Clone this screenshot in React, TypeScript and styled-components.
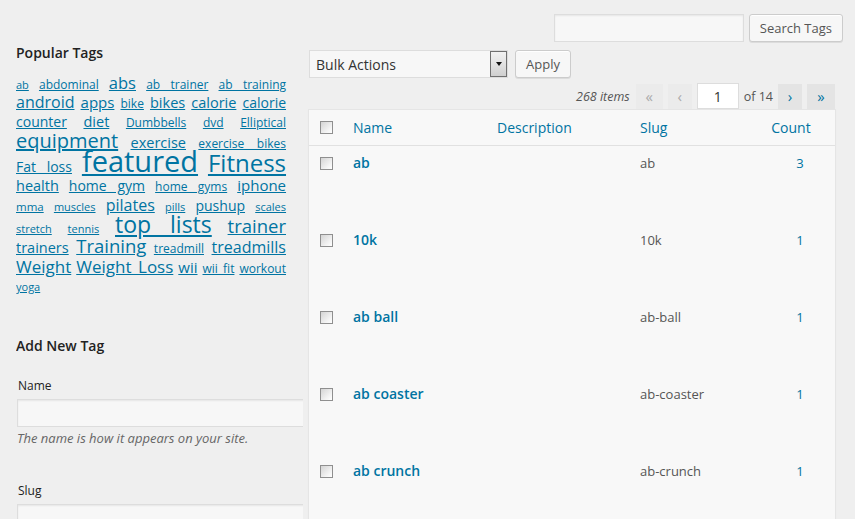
import React from 'react'
import styled, { createGlobalStyle } from 'styled-components'

const blue = '#0074a2'

const GlobalStyle = createGlobalStyle`
  html, body {
    margin: 0;
    padding: 0;
  }
  body {
    background: #efefef;
    font-family: 'Open Sans', 'Liberation Sans', sans-serif;
    color: #444;
    font-size: 13px;
    overflow: hidden;
  }
`

const Wrap = styled.div`
  width: 855px;
  height: 519px;
  box-sizing: border-box;
  padding: 14px 12px 0 16px;
  overflow: hidden;
`

const SearchBar = styled.div`
  display: flex;
  justify-content: flex-end;
  gap: 5px;
`

const TextInput = styled.input<{ $w?: string }>`
  box-sizing: border-box;
  height: 28px;
  width: ${p => p.$w ?? '100%'};
  margin: 0;
  padding: 3px 6px;
  border: 1px solid #ddd;
  border-radius: 0;
  background: #f7f7f7;
  box-shadow: inset 0 1px 2px rgba(0, 0, 0, 0.07);
  font-family: inherit;
  font-size: 14px;
  color: #333;
  outline: none;
`

const Button = styled.button`
  box-sizing: border-box;
  height: 28px;
  margin: 0;
  padding: 0 10px 1px;
  border: 1px solid #ccc;
  border-radius: 3px;
  background: #f7f7f7;
  box-shadow: inset 0 1px 0 #fff, 0 1px 0 rgba(0, 0, 0, 0.08);
  font-family: inherit;
  font-size: 13px;
  color: #555;
`

const Columns = styled.div`
  display: flex;
  align-items: flex-start;
`

const LeftCol = styled.div`
  flex: none;
  width: 287px;
  overflow: hidden;
`

const RightCol = styled.div`
  flex: 1;
  min-width: 0;
  margin-left: 5px;
  padding-right: 7px;
`

const Heading = styled.h3<{ $gap: number }>`
  margin: ${p => p.$gap}px 0 0;
  font-size: 14px;
  font-weight: 600;
  line-height: 19px;
  color: #222;
`

const TagCloud = styled.div`
  width: 270px;
  margin-top: 13px;
`

// one visual line of the cloud, stretched edge to edge like the original
const TagLine = styled.div<{ $gap: number; $last?: boolean }>`
  margin-top: ${p => p.$gap}px;
  height: 20px;
  font-size: 11px;
  line-height: 20px;
  text-align: justify;
  text-align-last: ${p => (p.$last ? 'left' : 'justify')};
`

const Tag = styled.a<{ $size: number }>`
  font-size: ${p => p.$size}px;
  line-height: 0;
  color: ${blue};
  text-decoration: underline;
`

const FieldLabel = styled.label<{ $gap: number }>`
  display: block;
  margin: ${p => p.$gap}px 0 4px 2px;
  font-size: 12px;
  line-height: 18px;
  color: #222;
`

const FieldInput = styled(TextInput)`
  margin-left: 1px;
  width: 290px;
`

const Hint = styled.p`
  margin: 2px 0 0 1px;
  font-size: 13px;
  font-style: italic;
  line-height: 18px;
  color: #666;
`

const TableNav = styled.div`
  display: flex;
  align-items: center;
  gap: 7px;
  margin-top: 8px;
`

const SelectBox = styled.div`
  box-sizing: border-box;
  width: 199px;
  height: 28px;
  margin-left: 1px;
  padding-left: 6px;
  display: flex;
  align-items: center;
  justify-content: space-between;
  border: 1px solid #ddd;
  background: #f7f7f7;
  font-size: 14px;
  color: #333;
`

const SelectArrow = styled.span`
  box-sizing: border-box;
  width: 17px;
  height: 26px;
  display: flex;
  justify-content: center;
  padding-top: 10px;
  border: 1px solid #707070;
  background: linear-gradient(#f2f2f2, #e0e0e0 55%, #cfcfcf);

  &::after {
    content: '';
    width: 0;
    height: 0;
    border-left: 3.5px solid transparent;
    border-right: 3.5px solid transparent;
    border-top: 4px solid #111;
  }
`

const Pagination = styled.div`
  display: flex;
  justify-content: flex-end;
  align-items: center;
  gap: 5px;
  margin-top: 5px;
  padding-right: 1px;
`

const ItemCount = styled.span`
  margin-right: 1px;
  font-size: 12.5px;
  font-style: italic;
  color: #555;
`

const PageButton = styled.span<{ $disabled?: boolean; $w: number }>`
  box-sizing: border-box;
  width: ${p => p.$w}px;
  height: 25px;
  display: flex;
  align-items: center;
  justify-content: center;
  background: ${p => (p.$disabled ? '#ebebeb' : '#e4e4e4')};
  color: ${p => (p.$disabled ? '#aaa' : blue)};
  font-size: 15px;
  line-height: 1;
`

const PageInput = styled.span`
  box-sizing: border-box;
  width: 42px;
  height: 26px;
  display: flex;
  align-items: center;
  justify-content: center;
  border: 1px solid #ddd;
  background: #fff;
  font-size: 14px;
  color: #333;
`

const OfPages = styled.span`
  font-size: 12.5px;
  color: #555;
`

const Table = styled.div`
  border: 1px solid #e5e5e5;
  background: #f8f8f8;
  box-shadow: 0 1px 1px rgba(0, 0, 0, 0.04);
`

const gridCols = '36px 144px 143px 1fr 82px'

const HeadRow = styled.div`
  display: grid;
  grid-template-columns: ${gridCols};
  align-items: center;
  height: 35px;
  border-bottom: 1px solid #e1e1e1;
`

const BodyRow = styled.div`
  display: grid;
  grid-template-columns: ${gridCols};
  align-items: start;
  box-sizing: border-box;
  height: 77px;
  padding-top: 7px;
`

const CheckCell = styled.div`
  padding-left: 11px;
  display: flex;
  align-items: center;
  height: 20px;
`

const CheckBox = styled.span`
  box-sizing: border-box;
  width: 13px;
  height: 13px;
  border: 1px solid #8f8f8f;
  background: linear-gradient(135deg, #d4d4d4, #f4f4f4 70%, #fff);
`

const HeadCell = styled.div<{ $center?: boolean }>`
  padding-left: ${p => (p.$center ? '0' : '8px')};
  padding-right: ${p => (p.$center ? '6px' : '0')};
  text-align: ${p => (p.$center ? 'center' : 'left')};
  font-size: 14px;
  line-height: 20px;
  color: ${blue};
`

const RowTitle = styled.div`
  padding-left: 8px;
  font-size: 14px;
  font-weight: 600;
  line-height: 20px;
  color: ${blue};
`

const Cell = styled.div<{ $count?: boolean }>`
  padding-left: ${p => (p.$count ? '12px' : '8px')};
  text-align: ${p => (p.$count ? 'center' : 'left')};
  font-size: 13px;
  line-height: 20px;
  color: ${p => (p.$count ? blue : '#555')};
`

type TagItem = [string, number]

// lines of the tag cloud as they wrap in the original, with the extra
// spacing each line gets from its tallest tag
const tagLines: { gap: number; tags: TagItem[] }[] = [
  { gap: 0, tags: [['ab', 11], ['abdominal', 12], ['abs', 16.5], ['ab trainer', 12], ['ab training', 12]] },
  { gap: -1, tags: [['android', 16], ['apps', 15], ['bike', 12], ['bikes', 14.5], ['calorie', 14.5], ['calorie', 14]] },
  { gap: -1, tags: [['counter', 14], ['diet', 14.5], ['Dumbbells', 12], ['dvd', 12], ['Elliptical', 12]] },
  { gap: 1, tags: [['equipment', 20], ['exercise', 14.5], ['exercise bikes', 12]] },
  { gap: 4, tags: [['Fat loss', 14], ['featured', 29], ['Fitness', 24]] },
  { gap: -1, tags: [['health', 14.5], ['home gym', 14], ['home gyms', 12], ['iphone', 15]] },
  { gap: 0, tags: [['mma', 11.5], ['muscles', 11], ['pilates', 16], ['pills', 11], ['pushup', 14], ['scales', 11]] },
  { gap: 2, tags: [['stretch', 11], ['tennis', 11], ['top lists', 23], ['trainer', 18.5]] },
  { gap: 0, tags: [['trainers', 14.5], ['Training', 18.5], ['treadmill', 12], ['treadmills', 16]] },
  { gap: 0, tags: [['Weight', 17], ['Weight Loss', 17], ['wii', 15], ['wii fit', 12], ['workout', 12]] },
  { gap: -2, tags: [['yoga', 11]] },
]

const rows = [
  { name: 'ab', slug: 'ab', count: 3 },
  { name: '10k', slug: '10k', count: 1 },
  { name: 'ab ball', slug: 'ab-ball', count: 1 },
  { name: 'ab coaster', slug: 'ab-coaster', count: 1 },
  { name: 'ab crunch', slug: 'ab-crunch', count: 1 },
]

const App: React.FC = () => {
  return (
    <>
      <GlobalStyle />
      <Wrap>
        <SearchBar>
          <TextInput $w="190px" />
          <Button>Search Tags</Button>
        </SearchBar>

        <Columns>
          <LeftCol>
            <Heading $gap={1}>Popular Tags</Heading>
            <TagCloud>
              {tagLines.map((line, i) => (
                <TagLine key={i} $gap={line.gap} $last={i === tagLines.length - 1}>
                  {line.tags.map(([label, size], j) => (
                    <React.Fragment key={label + j}>
                      {j > 0 && ' '}
                      <Tag href="#" $size={size}>
                        {label}
                      </Tag>
                    </React.Fragment>
                  ))}
                </TagLine>
              ))}
            </TagCloud>

            <Heading $gap={39}>Add New Tag</Heading>
            <FieldLabel $gap={22}>Name</FieldLabel>
            <FieldInput />
            <Hint>The name is how it appears on your site.</Hint>
            <FieldLabel $gap={35}>Slug</FieldLabel>
            <FieldInput />
          </LeftCol>

          <RightCol>
            <TableNav>
              <SelectBox>
                Bulk Actions
                <SelectArrow />
              </SelectBox>
              <Button>Apply</Button>
            </TableNav>

            <Pagination>
              <ItemCount>268 items</ItemCount>
              <PageButton $disabled $w={27}>«</PageButton>
              <PageButton $disabled $w={24}>‹</PageButton>
              <PageInput>1</PageInput>
              <OfPages>of 14</OfPages>
              <PageButton $w={24}>›</PageButton>
              <PageButton $w={28}>»</PageButton>
            </Pagination>

            <Table>
              <HeadRow>
                <CheckCell>
                  <CheckBox />
                </CheckCell>
                <HeadCell>Name</HeadCell>
                <HeadCell>Description</HeadCell>
                <HeadCell>Slug</HeadCell>
                <HeadCell $center>Count</HeadCell>
              </HeadRow>
              {rows.map(r => (
                <BodyRow key={r.slug}>
                  <CheckCell>
                    <CheckBox />
                  </CheckCell>
                  <RowTitle>{r.name}</RowTitle>
                  <Cell />
                  <Cell>{r.slug}</Cell>
                  <Cell $count>{r.count}</Cell>
                </BodyRow>
              ))}
            </Table>
          </RightCol>
        </Columns>
      </Wrap>
    </>
  )
}

export default App
